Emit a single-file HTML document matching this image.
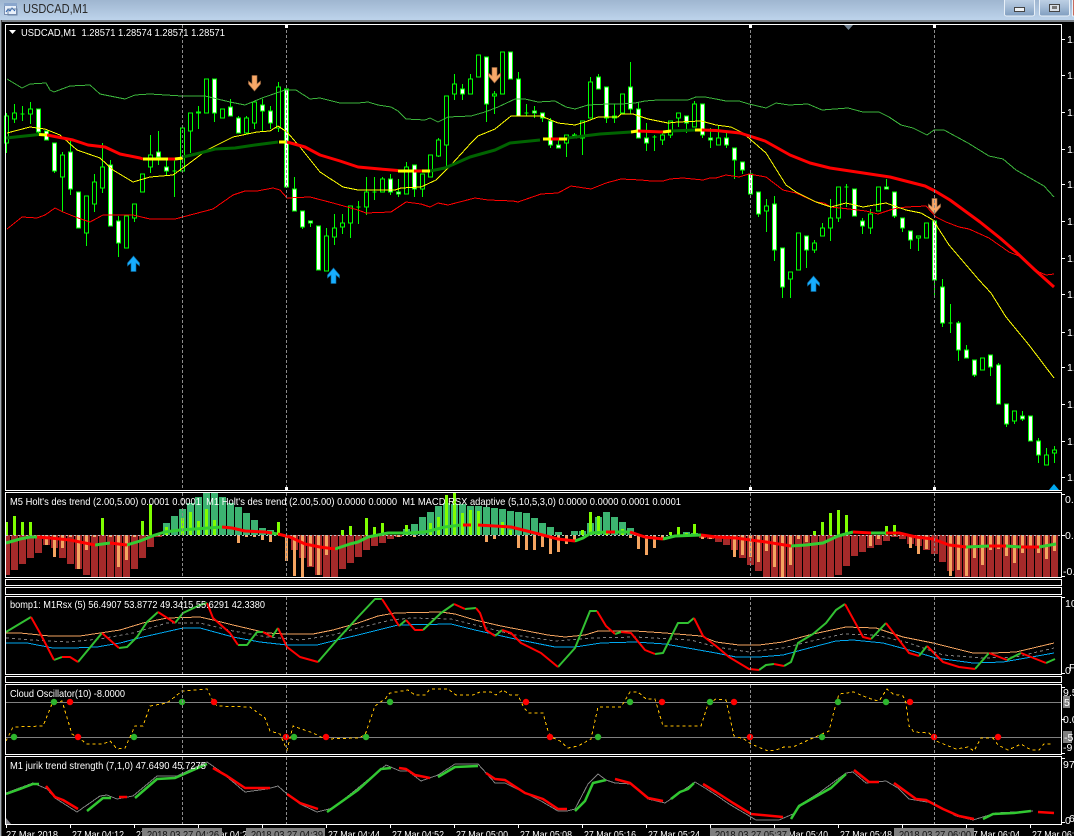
<!DOCTYPE html>
<html><head><meta charset="utf-8"><title>USDCAD,M1</title>
<style>
html,body{margin:0;padding:0;background:#000;width:1074px;height:836px;overflow:hidden}
svg{display:block;position:absolute;left:0;top:0}
text{font-family:"Liberation Sans",sans-serif;font-size:10.5px;fill:#fff;white-space:pre}
.c{fill:none;stroke:#0f0;stroke-width:1;shape-rendering:crispEdges}
.l{fill:none;shape-rendering:crispEdges;stroke-width:1}
.t{fill:none;stroke-linejoin:round;stroke-linecap:butt}
</style></head><body>
<svg width="1074" height="836" viewBox="0 0 1074 836" xmlns="http://www.w3.org/2000/svg" xml:space="preserve">
<defs>
<linearGradient id="tb" x1="0" y1="0" x2="0" y2="1"><stop offset="0" stop-color="#9fb6d0"/><stop offset="1" stop-color="#bdd3eb"/></linearGradient>
<linearGradient id="bt" x1="0" y1="0" x2="0" y2="1"><stop offset="0" stop-color="#c3d5e8"/><stop offset=".5" stop-color="#a5bcd6"/><stop offset="1" stop-color="#7f9dbf"/></linearGradient>
<clipPath id="p1"><rect x="6" y="493" width="1055" height="84"/></clipPath>
</defs>
<rect width="1074" height="836" fill="#000"/>
<rect width="1074" height="20" fill="url(#tb)"/>
<rect y="20" width="1074" height="2" fill="#7c8288"/>
<rect x="0" y="20" width="1" height="816" fill="#a4acb4"/>
<rect x="1" y="20" width="1" height="816" fill="#444"/>
<!-- title icon -->
<rect x="4.5" y="3.5" width="12" height="11" fill="#e8f0fa" stroke="#7a8fb0"/><rect x="4" y="3" width="13" height="3" fill="#8aa6cc"/><path d="M6 12l2-3 2 2 2-3 3 3" fill="none" stroke="#2a62b0"/><rect x="8" y="9" width="9" height="6" fill="none" stroke="#6d86a8"/>
<text x="23" y="13" style="font-size:13px;fill:#2a2a2a" textLength="65" lengthAdjust="spacingAndGlyphs">USDCAD,M1</text>
<!-- window buttons -->
<rect x="1004.5" y="-2" width="30" height="18" rx="2" fill="url(#bt)" stroke="#e8f0f8"/><rect x="1014.5" y="7.5" width="10" height="4" fill="#eef2f6" stroke="#444"/>
<rect x="1039.5" y="-2" width="30" height="18" rx="2" fill="url(#bt)" stroke="#e8f0f8"/><rect x="1049.5" y="4.5" width="10" height="7" fill="#d9dfe6" stroke="#444"/><rect x="1052" y="6" width="5" height="3" fill="#777"/>
<rect x="1072.5" y="-2" width="4" height="18" fill="#c86a5c" stroke="#e8f0f8"/>
<!-- candles -->
<path class="c" d="M6.5 113V153M14.5 104V123M22.5 106V121M30.5 102V124M38.5 109V135M46.5 131V140M54.5 143V173M62.5 152V212M70.5 140V195M86.5 196V246M94.5 174V212M102.5 143V193M110.5 160V226M118.5 216V257M134.5 204V222M150.5 135V173M158.5 131V165M166.5 158V175M174.5 160V197M190.5 113V153M198.5 106V129M214.5 79V122M230.5 99V116M238.5 116V133M246.5 116V133M254.5 102V129M262.5 99V131M270.5 106V129M278.5 82V132M294.5 177V211M302.5 211V229M310.5 221V227M326.5 228V271M334.5 214V245M342.5 214V234M350.5 206V238M358.5 201V224M366.5 177V215M374.5 177V200M382.5 177V192M390.5 174V195M398.5 179V197M406.5 162V194M414.5 165V197M422.5 174V197M438.5 138V157M446.5 96V167M454.5 74V100M462.5 84V100M470.5 74V94M486.5 57V122M494.5 91V114M518.5 72V116M526.5 104V116M534.5 106V118M542.5 113V122M550.5 118V148M558.5 140V148M566.5 135V157M574.5 133V138M582.5 121V155M590.5 77V118M598.5 74V89M606.5 87V123M614.5 104V123M630.5 62V114M638.5 103V138M646.5 123V151M654.5 135V151M662.5 131V145M670.5 121V138M678.5 113V127M686.5 116V133M694.5 101V127M702.5 104V138M710.5 128V148M718.5 125V145M726.5 133V148M734.5 148V179M742.5 162V174M750.5 172V194M758.5 192V217M766.5 199V232M774.5 196V261M782.5 248V298M790.5 272V298M806.5 236V268M814.5 240V253M822.5 223V236M830.5 199V241M838.5 187V222M846.5 184V207M862.5 218V234M870.5 209V234M886.5 179V189M894.5 192V218M902.5 218V232M910.5 231V249M918.5 236V251M934.5 221V295M942.5 279V327M950.5 304V333M958.5 321V361M966.5 345V358M974.5 360V377M990.5 355V376M998.5 363V404M1006.5 404V427M1014.5 411V424M1022.5 411V421M1038.5 438V463M1046.5 448V465M1054.5 446V463"/>
<path class="c" style="fill:#000" d="M4.5 116h4V143h-4zM12.5 113h4V119h-4zM20.5 114h4zM28.5 109h4V114h-4zM60.5 155h4V177h-4zM84.5 196h4V233h-4zM92.5 182h4V204h-4zM100.5 167h4V188h-4zM124.5 216h4V248h-4zM132.5 204h4V218h-4zM140.5 174h4V192h-4zM148.5 155h4V167h-4zM172.5 171h4zM180.5 128h4V171h-4zM188.5 113h4V131h-4zM204.5 79h4V113h-4zM220.5 109h4V118h-4zM244.5 118h4V133h-4zM252.5 102h4V123h-4zM276.5 87h4V128h-4zM324.5 236h4V271h-4zM332.5 228h4V237h-4zM340.5 223h4V227h-4zM348.5 206h4V223h-4zM356.5 207h4zM364.5 192h4V207h-4zM372.5 192h4zM380.5 179h4V192h-4zM404.5 167h4V194h-4zM420.5 174h4V189h-4zM428.5 155h4V177h-4zM436.5 140h4V156h-4zM444.5 96h4V145h-4zM452.5 84h4V94h-4zM468.5 79h4V94h-4zM476.5 55h4V77h-4zM492.5 94h4V96h-4zM500.5 52h4V94h-4zM524.5 113h4zM564.5 135h4V143h-4zM580.5 121h4V138h-4zM588.5 82h4V118h-4zM620.5 94h4V113h-4zM652.5 137h4zM660.5 135h4V140h-4zM668.5 121h4V135h-4zM676.5 113h4V118h-4zM692.5 104h4V127h-4zM716.5 138h4V145h-4zM764.5 206h4V211h-4zM788.5 272h4V279h-4zM796.5 233h4V270h-4zM812.5 243h4V250h-4zM820.5 228h4V236h-4zM828.5 218h4V228h-4zM836.5 187h4V218h-4zM844.5 187h4zM868.5 214h4V228h-4zM876.5 187h4V211h-4zM916.5 236h4V238h-4zM924.5 223h4V238h-4zM948.5 323h4zM980.5 358h4V370h-4zM1012.5 411h4V421h-4zM1044.5 455h4V465h-4zM1052.5 450h4V453h-4z"/>
<path class="c" style="fill:#fff" d="M36.5 109h4V132h-4zM44.5 131h4V140h-4zM52.5 143h4V171h-4zM68.5 152h4V189h-4zM76.5 192h4V228h-4zM108.5 165h4V226h-4zM116.5 221h4V243h-4zM156.5 152h4V157h-4zM164.5 167h4V171h-4zM196.5 112h4V113h-4zM212.5 79h4V113h-4zM228.5 107h4V116h-4zM236.5 118h4V133h-4zM260.5 105h4V111h-4zM268.5 111h4V123h-4zM284.5 89h4V187h-4zM292.5 189h4V211h-4zM300.5 211h4V227h-4zM308.5 221h4V223h-4zM316.5 226h4V270h-4zM388.5 179h4V192h-4zM396.5 192h4V194h-4zM412.5 165h4V189h-4zM460.5 89h4V94h-4zM484.5 57h4V104h-4zM508.5 52h4V79h-4zM516.5 79h4V116h-4zM532.5 111h4V113h-4zM540.5 113h4V118h-4zM548.5 121h4V145h-4zM556.5 145h4V148h-4zM572.5 135h4V138h-4zM596.5 77h4V89h-4zM604.5 87h4V118h-4zM612.5 116h4V118h-4zM628.5 87h4V109h-4zM636.5 109h4V138h-4zM644.5 138h4V143h-4zM684.5 116h4V123h-4zM700.5 104h4V135h-4zM708.5 138h4V140h-4zM724.5 138h4V145h-4zM732.5 148h4V160h-4zM740.5 162h4V170h-4zM748.5 174h4V194h-4zM756.5 192h4V214h-4zM772.5 204h4V250h-4zM780.5 248h4V287h-4zM804.5 236h4V250h-4zM852.5 189h4V216h-4zM860.5 221h4V226h-4zM884.5 187h4V189h-4zM892.5 192h4V216h-4zM900.5 218h4V228h-4zM908.5 231h4V240h-4zM932.5 221h4V280h-4zM940.5 287h4V323h-4zM956.5 323h4V350h-4zM964.5 350h4V358h-4zM972.5 360h4V375h-4zM988.5 355h4V367h-4zM996.5 365h4V404h-4zM1004.5 404h4V424h-4zM1020.5 416h4V419h-4zM1028.5 416h4V441h-4zM1036.5 441h4V455h-4z"/>
<!-- bands -->
<polyline class="l" stroke="#3cb43c" points="7,79 22,88 30,84 46,83 50,90 54,92 70,86 90,85 100,94 125,99 135,95 150,94 182,96 205,96 230,102 245,105 262,98 285,90 296,90 310,99 320,98 340,103 358,103 368,102 378,105 391,107 398,111 406,119 425,120 430,118 438,122 448,117 471,116 485,112 498,107 515,99 525,99 538,102 555,101 566,107 575,109 588,105 608,104 621,104 635,103 645,101 658,100 688,100 696,97 705,97 716,99 726,101 739,101 749,104 766,108 776,103 789,105 808,104 822,110 848,108 863,112 879,112 889,117 901,125 913,128 927,135 934,130 944,130 968,143 989,156 1003,159 1016,170 1044,186 1054,197"/>
<polyline class="l" stroke="#f00" points="7,229 22,217 37,218 45,215 55,208 63,212 78,218 90,222 103,215 133,215 150,219 175,219 213,209 233,195 245,191 257,191 273,188 280,190 287,198 310,197 333,203 358,210 366,213 391,212 406,202 421,204 430,207 438,203 448,205 475,198 488,200 513,201 518,202 541,194 558,193 571,186 591,189 606,183 621,179 641,180 651,181 663,181 670,179 683,178 703,180 710,178 716,178 726,175 739,177 749,174 766,177 783,190 796,193 816,202 824,203 831,207 849,209 866,211 878,214 893,209 906,207 926,206 936,217 946,222 959,227 969,229 989,238 1009,252 1019,256 1039,272 1046,275 1054,274"/>
<polyline class="l" stroke="#ff0" points="7,133 30,127 45,129 60,135 77,150 100,158 113,170 133,182 150,177 173,175 187,165 207,150 233,137 257,132 270,131 278,126 287,132 300,147 320,172 343,187 358,190 378,190 395,190 401,188 421,187 436,180 451,165 471,143 478,136 495,129 511,116 541,116 558,123 575,125 585,122 598,117 618,117 621,114 633,114 648,119 668,123 678,122 701,121 716,125 731,127 743,133 766,153 786,185 796,192 816,202 831,207 846,203 863,207 886,203 906,210 921,213 933,220 949,245 979,280 991,293 1006,317 1029,345 1054,378"/>
<!-- thick MA -->
<path class="t" stroke="#006400" stroke-width="3" d="M6 138L39 134.5M183 157L200 153L215 149L235 148L255 145L278 142M430 171L445 168L470 157L495 150L510 143L540 140M567 138L600 134L631 132M671 131L695 130"/>
<path class="t" stroke="#f00" stroke-width="3" d="M47 135L73 140L88 145L105 147L120 154L140 158L143 159M168 159L175 159M287 142L305 147L320 155L340 161L358 167L380 169L398 170.5M414 171L422 171M551 139L559 139M638 131L663 132M702 130L716 130.5L740 133L765 141L790 155L810 163L830 168L850 171L890 177L925 186L935 191L950 200L980 222L1000 238L1016 252L1035 270L1054 287"/>
<path class="t" stroke="#ff0" stroke-width="3" d="M39 134.5L47 135M143 159L168 159M175 159L183 158M279 142L287 142M398 171L414 171M422 171L430 171M543 139L551 139M559 139L567 139M631 132L638 131M663 132L671 131M695 130L702 130"/>
<!-- arrows -->
<g fill="#18aeff" stroke="#0a6aa0" stroke-width=".6">
<path d="M133.5 256l6 7v3l-3.500-3v8.500h-5v-8.500l-3.500 3v-3z"/>
<path d="M333.500 268l6 7v3l-3.500-3v8.500h-5v-8.500l-3.500 3v-3z"/>
<path d="M813.500 276l6 7v3l-3.500-3v8.500h-5v-8.500l-3.500 3v-3z"/>
</g>
<g fill="#f8a868" stroke="#a06a40" stroke-width=".6">
<path d="M254.500 91l-6-7v-3l3.500 3v-8.500h5v8.500l3.500-3v3z"/>
<path d="M494.500 83l-6-7v-3l3.500 3v-8.500h5v8.500l3.500-3v3z"/>
<path d="M934.500 214l-6-7v-3l3.500 3v-8.500h5v8.500l3.500-3v3z"/>
</g>
<!-- panel 1 histogram -->
<g clip-path="url(#p1)">
<path fill="none" stroke="#a52a2a" stroke-width="7" d="M6.500 535V575M14.500 535V570M22.500 535V564M30.500 535V558M38.500 535V553M46.500 535V545M54.500 535V548M62.500 535V558M70.500 535V564M78.500 535V569M86.500 535V575M94.500 535V577M102.500 535V577M110.500 535V577M118.500 535V577M126.500 535V577M134.500 535V569M142.500 535V558M150.500 535V547M158.500 535V537M286.500 535V537M294.500 535V550M302.500 535V558M310.500 535V567M318.500 535V575M326.500 535V577M334.500 535V577M342.500 535V569M350.500 535V563M358.500 535V557M366.500 535V550M374.500 535V546M382.500 535V543M390.500 535V539M398.500 535V537M702.500 535V538M710.500 535V539M718.500 535V542M726.500 535V545M734.500 535V550M742.500 535V558M750.500 535V565M758.500 535V571M766.500 535V577M774.500 535V577M782.500 535V577M790.500 535V577M798.500 535V577M806.500 535V577M814.500 535V577M822.500 535V577M830.500 535V577M838.500 535V575M846.500 535V566M854.500 535V556M862.500 535V552M870.500 535V548M878.500 535V545M886.500 535V541M894.500 535V537M902.500 535V539M910.500 535V544M918.500 535V546M926.500 535V550M934.500 535V554M942.500 535V562M950.500 535V571M958.500 535V577M966.500 535V577M974.500 535V577M982.500 535V577M990.500 535V577M998.500 535V577M1006.500 535V577M1014.500 535V577M1022.500 535V577M1030.500 535V577M1038.500 535V577M1046.500 535V577M1054.500 535V577"/>
<path fill="none" stroke="#3cb371" stroke-width="7" d="M166.500 535V523M174.500 535V516M182.500 535V509M190.500 535V503M198.500 535V497M206.500 535V493M214.500 535V493M222.500 535V497M230.500 535V503M238.500 535V507M246.500 535V513M254.500 535V520M262.500 535V528M270.500 535V530M406.500 535V529M414.500 535V524M422.500 535V517M430.500 535V512M438.500 535V506M446.500 535V503M454.500 535V504M462.500 535V504M470.500 535V506M478.500 535V506M486.500 535V507M494.500 535V508M502.500 535V509M510.500 535V511M518.500 535V512M526.500 535V513M534.500 535V518M542.500 535V523M550.500 535V527M558.500 535V532M574.500 535V531M582.500 535V531M590.500 535V523M598.500 535V517M606.500 535V512M614.500 535V517M622.500 535V522M630.500 535V528M686.500 535V532M694.500 535V533"/>
<path fill="none" stroke="#7fff00" stroke-width="3" d="M6.500 535V522M14.500 535V516M22.500 535V522M30.500 535V522M102.500 535V518M142.500 535V521M150.500 535V504M166.500 535V527M182.500 535V518M190.500 535V512M198.500 535V521M206.500 535V509M214.500 535V520M278.500 535V522M342.500 535V530M350.500 535V526M366.500 535V518M374.500 535V527M382.500 535V523M406.500 535V525M430.500 535V523M438.500 535V517M446.500 535V495M454.500 535V493M462.500 535V513M470.500 535V510M478.500 535V511M502.500 535V522M510.500 535V530M582.500 535V530M590.500 535V512M598.500 535V516M606.500 535V532M622.500 535V529M670.500 535V532M678.500 535V527M686.500 535V533M694.500 535V524M814.500 535V531M822.500 535V522M830.500 535V513M838.500 535V510M846.500 535V515M886.500 535V526M894.500 535V525"/>
<path fill="none" stroke="#f4a460" stroke-width="3" d="M38.500 535V537M46.500 535V545M54.500 535V557M62.500 535V548M70.500 535V537M78.500 535V569M86.500 535V550M94.500 535V537M110.500 535V537M118.500 535V567M126.500 535V560M134.500 535V537M238.500 535V543M246.500 535V537M254.500 535V537M262.500 535V540M270.500 535V542M286.500 535V561M294.500 535V576M302.500 535V577M310.500 535V566M318.500 535V575M326.500 535V555M398.500 535V537M414.500 535V537M486.500 535V542M494.500 535V539M518.500 535V548M526.500 535V550M534.500 535V550M542.500 535V547M550.500 535V554M558.500 535V552M566.500 535V544M574.500 535V542M630.500 535V538M638.500 535V549M646.500 535V555M654.500 535V548M662.500 535V540M702.500 535V539M710.500 535V539M734.500 535V557M742.500 535V555M750.500 535V557M758.500 535V562M766.500 535V551M774.500 535V567M782.500 535V577M790.500 535V565M798.500 535V539M806.500 535V542M870.500 535V546M878.500 535V539M910.500 535V548M918.500 535V554M926.500 535V549M950.500 535V576M958.500 535V570M966.500 535V576M974.500 535V558M982.500 535V565M990.500 535V550M998.500 535V549M1006.500 535V556M1014.500 535V563M1022.500 535V553M1030.500 535V548M1038.500 535V553M1046.500 535V559M1054.500 535V551"/>
</g>
<path class="l" stroke="#c0c0c0" stroke-dasharray="2 2" d="M6 535.500H1061"/>
<path class="t" stroke="#32cd32" stroke-width="3" d="M6 543L20 539L30 537L37 537M95 545L110 543M127 545L140 541L155 535L165 532L180 530L195 529L222 527M272 533L277 534M335 549L350 544L358 542L368 537L388 533L408 533L425 532L445 527L461 525M575 541L583 538L591 533L606 532M615 532L630 532M663 539L675 536L701 535M791 546L806 545L823 543L838 536L853 532M871 533L886 533M966 547L989 546M1006 546L1021 547M1039 547L1056 544"/>
<path class="t" stroke="#f00" stroke-width="3" d="M37 537L50 538L70 540L80 542L95 545M110 543L127 545M222 527L232 528L245 531L265 532L272 533M278 534L290 537L305 544L320 547L335 549M463 525L471 525M478 525L511 527L531 532L558 539L575 541M606 532L615 532M630 532L645 537L663 539M701 535L716 537L736 538L766 542L791 546M853 532L871 533M886 533L899 533L916 537L933 539L949 545L966 547M989 546L1006 546M1021 547L1039 547"/>
<!-- panel 2 -->
<polyline class="l" stroke="#f4a460" points="6,633 20,633 50,636 80,636 100,633 120,630 143,623 167,618 200,617 213,620 233,625 267,633 287,634 313,634 333,630 358,623 378,616 395,613 441,612 455,614 475,620 501,626 548,635 565,637 585,635 598,631 635,631 665,633 701,636 716,642 739,645 759,645 783,642 813,634 846,627 876,628 903,637 933,643 973,653 993,653 1016,652 1054,643"/>
<polyline class="l" stroke="#808080" stroke-dasharray="3 3" points="6,638 33,640 67,642 100,639 133,633 167,623 200,623 233,631 267,637 300,640 333,635 358,628 391,620 411,618 451,619 475,625 515,635 555,641 591,638 635,637 691,640 716,647 749,652 783,648 816,640 843,634 876,635 909,643 943,655 983,658 1016,657 1054,648"/>
<polyline class="l" stroke="#00a8f0" points="6,643 27,643 53,648 73,648 97,647 120,643 143,637 183,628 200,628 233,637 260,642 287,645 317,645 337,640 358,635 398,625 451,624 475,630 515,639 555,647 575,647 601,643 635,642 665,644 716,653 736,657 759,657 783,655 813,647 836,641 853,640 883,643 909,650 936,658 973,663 1003,662 1026,658 1054,653"/>
<path class="t" stroke="#32c032" stroke-width="2" d="M6 632L31 617M54 660L62 657M78 662L102 633M119 648L127 647L137 637L147 622L158 612M175 623L183 613L200 605L207 603M238 645L247 645L257 632L263 632M272 637L278 628M318 662L337 640L358 617L375 599L382 599M399 626L406 620M423 630L441 613L454 604M465 609L476 608M495 636L502 630M558 667L575 648L590 611L597 611M615 634L621 632M655 654L663 653L678 623L688 623L694 618M759 670L766 665L774 664M784 666L791 662L798 643L813 634L826 623L836 610L845 604M871 639L886 623M919 656L927 646M975 669L989 653M1007 660L1021 653M1046 663L1055 659"/>
<path class="t" stroke="#f00" stroke-width="2" d="M31 617L40 633L54 660M62 657L70 657L78 662M102 633L119 648M158 612L175 623M207 603L213 618L230 633L238 645M263 632L272 637M278 628L287 647L300 657L318 662M382 599L391 613L399 626M406 620L415 630L423 630M454 604L465 609M476 608L480 613L486 630L495 636M502 630L511 633L521 643L541 653L558 667M597 611L606 626L615 634M621 632L631 633L645 650L655 654M694 618L703 636L716 646L729 657L749 669L759 670M774 664L784 666M845 604L863 637L871 639M886 623L909 653L919 656M927 646L943 662L959 667L975 669M989 653L1007 660M1021 653L1046 663"/>
<!-- panel 3 -->
<path class="l" stroke="#808080" d="M6 702.500H1061M6 737.500H1061"/>
<polyline class="l" stroke="#ffc000" stroke-dasharray="3 3" points="6,741 13,727 43,726 52,704 62,701 72,734 80,739 87,744 103,744 110,741 117,749 125,748 135,726 143,726 150,706 167,703 182,691 207,689 213,701 217,706 250,707 265,718 270,731 280,734 287,750 293,726 313,733 325,739 358,738 365,735 375,706 385,699 390,693 408,690 415,695 425,695 430,689 448,689 456,695 473,695 480,692 491,692 496,695 503,690 510,695 518,695 523,706 528,713 543,713 548,731 551,737 560,741 568,748 578,746 591,739 598,707 621,707 630,692 638,692 646,699 655,699 663,726 701,726 708,704 716,699 726,700 729,713 734,736 744,739 751,744 768,751 776,750 784,747 793,747 804,742 822,734 829,731 834,711 839,694 854,692 863,696 874,700 879,701 887,689 893,694 903,696 906,703 909,726 914,732 929,733 936,741 956,749 968,747 974,751 981,738 993,738 998,745 1008,750 1021,744 1031,750 1039,750 1044,744 1053,744"/>
<g fill="#2db52d"><circle cx="14" cy="737" r="3.2"/><circle cx="54" cy="702" r="3.2"/><circle cx="134" cy="737" r="3.2"/><circle cx="182" cy="702" r="3.2"/><circle cx="294" cy="737" r="3.2"/><circle cx="366" cy="737" r="3.2"/><circle cx="390" cy="702" r="3.2"/><circle cx="598" cy="737" r="3.2"/><circle cx="630" cy="702" r="3.2"/><circle cx="710" cy="702" r="3.2"/><circle cx="822" cy="737" r="3.2"/><circle cx="838" cy="702" r="3.2"/><circle cx="886" cy="702" r="3.2"/></g>
<g fill="#f00"><circle cx="70" cy="702" r="3.2"/><circle cx="78" cy="737" r="3.2"/><circle cx="214" cy="702" r="3.2"/><circle cx="286" cy="737" r="3.2"/><circle cx="326" cy="737" r="3.2"/><circle cx="526" cy="702" r="3.2"/><circle cx="550" cy="737" r="3.2"/><circle cx="662" cy="702" r="3.2"/><circle cx="734" cy="702" r="3.2"/><circle cx="750" cy="737" r="3.2"/><circle cx="910" cy="702" r="3.2"/><circle cx="934" cy="737" r="3.2"/><circle cx="998" cy="737" r="3.2"/></g>
<!-- panel 4 -->
<polyline class="l" stroke="#808080" points="6,793 33,783 47,789 55,798 77,812 100,796 107,795 117,799 133,796 157,776 177,776 207,762 220,771 245,792 267,789 278,786 287,794 300,804 317,812 333,808 358,788 386,765 400,771 408,771 421,781 438,775 455,764 478,764 495,783 505,783 541,801 558,811 567,811 575,809 588,784 598,774 606,780 615,783 631,784 648,799 665,803 695,782 705,788 716,795 729,804 756,820 779,820 793,814 803,803 819,793 846,773 853,772 866,783 886,781 898,788 909,799 933,803 956,816 973,820 996,813 1033,811"/>
<path class="t" stroke="#32c832" stroke-width="2.500" d="M6 794L20 789L33 784L39 784M87 811L103 798L111 798M135 798L157 779L175 778L207 764M327 812L358 790L381 769L391 768M438 777L455 767L478 766M575 811L585 801L593 783L606 780M671 799L680 792L688 789L694 783M791 819L799 806L831 788L846 774M983 819L993 814L1014 813L1031 811"/>
<path class="t" stroke="#f00" stroke-width="2.500" d="M46 786L55 797L63 800L78 809M119 797L127 797M213 768L227 776L245 788L270 788M287 794L300 803L318 809M399 768L406 769L415 775L430 778M486 773L495 779L505 780L525 793L543 799L558 809L567 809M615 779L630 783L648 798L663 801M703 784L716 792L733 803L751 814L783 817M854 770L869 782L879 782M894 783L916 799L926 800L943 809L959 816L974 819M1038 812L1054 813"/>
<path fill="#8a8a90" d="M6 818L11 824H6z"/>
<!-- vlines -->
<path class="l" stroke="#8c8c8c" stroke-dasharray="3 2" d="M182.500 25V490M182.500 493V577M182.500 597V674M182.500 685V754M182.500 757V824M286.500 25V490M286.500 493V577M286.500 597V674M286.500 685V754M286.500 757V824M750.500 25V490M750.500 493V577M750.500 597V674M750.500 685V754M750.500 757V824M934.500 25V490M934.500 493V577M934.500 597V674M934.500 685V754M934.500 757V824"/>
<g fill="#fff"><rect x="285" y="25" width="3" height="3"/><rect x="749" y="25" width="3" height="3"/><rect x="933" y="25" width="3" height="3"/><rect x="285" y="487" width="3" height="3"/><rect x="749" y="487" width="3" height="3"/><rect x="933" y="487" width="3" height="3"/></g>
<path fill="#708090" d="M844 25h9l-4.500 5z"/>
<path fill="#00a8f0" d="M1049 490l5-6 5 6z"/>
<!-- frames -->
<g fill="none" stroke="#fff" shape-rendering="crispEdges">
<rect x="5.500" y="24.500" width="1056" height="466"/>
<rect x="5.500" y="492.500" width="1056" height="85"/>
<rect x="5.500" y="579.500" width="1056" height="6"/>
<rect x="5.500" y="587.500" width="1056" height="7"/>
<rect x="5.500" y="596.500" width="1056" height="78"/>
<rect x="5.500" y="676.500" width="1056" height="6"/>
<rect x="5.500" y="684.500" width="1056" height="70"/>
<rect x="5.500" y="756.500" width="1056" height="68"/>
</g>
<!-- top label -->
<path fill="#fff" d="M9 30h7l-3.500 4z"/>
<text x="21" y="36" textLength="204" lengthAdjust="spacingAndGlyphs">USDCAD,M1  1.28571 1.28574 1.28571 1.28571</text>
<text x="10" y="505" textLength="671" lengthAdjust="spacingAndGlyphs">M5 Holt's des trend (2.00,5.00) 0.0001 0.0001  M1 Holt's des trend (2.00,5.00) 0.0000 0.0000  M1 MACD RSX adaptive (5,10,5,3,0) 0.0000 0.0000 0.0001 0.0001</text>
<text x="10" y="608" textLength="255" lengthAdjust="spacingAndGlyphs">bomp1: M1Rsx (5) 56.4907 53.8772 49.3415 55.6291 42.3380</text>
<text x="10" y="697" textLength="115" lengthAdjust="spacingAndGlyphs">Cloud Oscillator(10) -8.0000</text>
<text x="10" y="769" textLength="196" lengthAdjust="spacingAndGlyphs">M1 jurik trend strength (7,1,0) 47.6490 45.7275</text>
<!-- right axis -->
<path stroke="#fff" shape-rendering="crispEdges" d="M1062 39.500h3M1062 75.500h3M1062 112.500h3M1062 149.500h3M1062 184.500h3M1062 221.500h3M1062 258.500h3M1062 294.500h3M1062 332.500h3M1062 367.500h3M1062 404.500h3M1062 441.500h3M1062 477.500h3M1062 494.500h3M1062 535.500h3M1062 576.500h3M1062 597.500h3M1062 673.500h3M1062 687.500h3M1062 719.500h3M1062 753.500h3M1062 758.500h3M1062 822.500h3"/>
<g style="fill:#fff">
<text x="1067" y="43">1.2860</text><text x="1067" y="79">1.2858</text><text x="1067" y="116">1.2856</text><text x="1067" y="153">1.2854</text><text x="1067" y="188">1.2852</text><text x="1067" y="225">1.2850</text><text x="1067" y="262">1.2848</text><text x="1067" y="298">1.2846</text><text x="1067" y="336">1.2844</text><text x="1067" y="371">1.2842</text><text x="1067" y="408">1.2840</text><text x="1067" y="445">1.2838</text><text x="1067" y="481">1.2836</text>
<text x="1065" y="503">0.0001</text><text x="1065" y="539">0.0000</text><text x="1063" y="575">-0.0001</text>
<text x="1065" y="607">100</text><text x="1065" y="674">0</text><text x="1069" y="671">F</text>
<text x="1063" y="696">9.5</text><text x="1063" y="723">0.0</text><text x="1063" y="751">-9</text>
<text x="1063" y="768">97</text><text x="1065" y="824">0</text><text x="1069" y="822">6</text>
</g>
<rect x="1063" y="696" width="7" height="12" fill="#808080"/><text x="1064" y="706">5</text>
<rect x="1063" y="731" width="9" height="12" fill="#808080"/><text x="1064" y="741">-5</text>
<!-- time axis -->
<path stroke="#fff" shape-rendering="crispEdges" d="M6.500 825v3M70.500 825v3M134.500 825v3M198.500 825v3M262.500 825v3M326.500 825v3M390.500 825v3M454.500 825v3M518.500 825v3M582.500 825v3M646.500 825v3M710.500 825v3M774.500 825v3M838.500 825v3M902.500 825v3M966.500 825v3M1030.500 825v3"/>
<text x="6" y="838" textLength="52" lengthAdjust="spacingAndGlyphs">27 Mar 2018</text>
<text x="72" y="838" textLength="52" lengthAdjust="spacingAndGlyphs">27 Mar 04:12</text>
<text x="136" y="838" textLength="52" lengthAdjust="spacingAndGlyphs">27 Mar 04:20</text>
<text x="200" y="838" textLength="52" lengthAdjust="spacingAndGlyphs">27 Mar 04:28</text>
<text x="264" y="838" textLength="52" lengthAdjust="spacingAndGlyphs">27 Mar 04:36</text>
<text x="328" y="838" textLength="52" lengthAdjust="spacingAndGlyphs">27 Mar 04:44</text>
<text x="392" y="838" textLength="52" lengthAdjust="spacingAndGlyphs">27 Mar 04:52</text>
<text x="456" y="838" textLength="52" lengthAdjust="spacingAndGlyphs">27 Mar 05:00</text>
<text x="520" y="838" textLength="52" lengthAdjust="spacingAndGlyphs">27 Mar 05:08</text>
<text x="584" y="838" textLength="52" lengthAdjust="spacingAndGlyphs">27 Mar 05:16</text>
<text x="648" y="838" textLength="52" lengthAdjust="spacingAndGlyphs">27 Mar 05:24</text>
<text x="712" y="838" textLength="52" lengthAdjust="spacingAndGlyphs">27 Mar 05:32</text>
<text x="776" y="838" textLength="52" lengthAdjust="spacingAndGlyphs">27 Mar 05:40</text>
<text x="840" y="838" textLength="52" lengthAdjust="spacingAndGlyphs">27 Mar 05:48</text>
<text x="904" y="838" textLength="52" lengthAdjust="spacingAndGlyphs">27 Mar 05:56</text>
<text x="968" y="838" textLength="52" lengthAdjust="spacingAndGlyphs">27 Mar 06:04</text>
<text x="1032" y="838" textLength="52" lengthAdjust="spacingAndGlyphs">27 Mar 06:12</text>
<g fill="#808080"><rect x="142" y="828" width="80" height="8"/><rect x="246" y="828" width="79" height="8"/><rect x="710" y="828" width="80" height="8"/><rect x="894" y="828" width="80" height="8"/></g>
<g style="fill:#111">
<text x="147" y="838" style="fill:#111" textLength="72" lengthAdjust="spacingAndGlyphs">2018.03.27 04:26</text>
<text x="251" y="838" style="fill:#111" textLength="72" lengthAdjust="spacingAndGlyphs">2018.03.27 04:39</text>
<text x="715" y="838" style="fill:#111" textLength="72" lengthAdjust="spacingAndGlyphs">2018.03.27 05:37</text>
<text x="899" y="838" style="fill:#111" textLength="72" lengthAdjust="spacingAndGlyphs">2018.03.27 06:00</text>
</g>
</svg>
</body></html>
